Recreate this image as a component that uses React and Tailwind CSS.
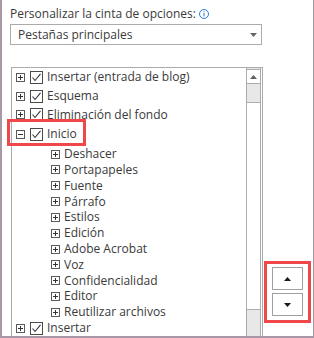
import React from 'react';

const font = { fontFamily: '"Open Sans", "Noto Sans", Arial, sans-serif' };

function Expander({ open = false }) {
  return (
    <svg width="9" height="9" viewBox="0 0 9 9" className="shrink-0">
      <rect x="0.5" y="0.5" width="8" height="8" fill="white" stroke="#5a5a5a" />
      <line x1="2" y1="4.5" x2="7" y2="4.5" stroke="#333" />
      {!open && <line x1="4.5" y1="2" x2="4.5" y2="7" stroke="#333" />}
    </svg>
  );
}

function Check() {
  return (
    <svg width="13" height="13" viewBox="0 0 13 13" className="shrink-0">
      <rect x="0.5" y="0.5" width="12" height="12" fill="white" stroke="#4a4a4a" />
      <polyline points="2.5,6.5 5,9.5 10.5,2.8" fill="none" stroke="#333" strokeWidth="1.1" />
    </svg>
  );
}

const topRows = ['Insertar (entrada de blog)', 'Esquema', 'Eliminación del fondo'];
const groups = [
  'Deshacer',
  'Portapapeles',
  'Fuente',
  'Párrafo',
  'Estilos',
  'Edición',
  'Adobe Acrobat',
  'Voz',
  'Confidencialidad',
  'Editor',
  'Reutilizar archivos',
];

function TopRow({ label, open }) {
  return (
    <div className="flex h-[19px] items-center pl-[4px]">
      <Expander open={open} />
      <span className="ml-[5px]"><Check /></span>
      <span className="ml-[4px] text-[12px] text-[#3a3a3a] leading-none">{label}</span>
    </div>
  );
}

function Tri({ down = false, color = '#333' }) {
  return (
    <svg width="7" height="4" viewBox="0 0 7 4">
      <polygon points={down ? '0,0 7,0 3.5,4' : '0,4 7,4 3.5,0'} fill={color} />
    </svg>
  );
}

export default function App() {
  return (
    <div
      style={font}
      className="relative w-[314px] h-[338px] bg-white border-l-2 border-r border-b-2 border-[#a898a6] overflow-hidden flex flex-col"
    >
      <div className="pl-[8px] pt-[6px] flex items-center h-[22px] text-[12px] text-[#3a3a3a]">
        Personalizar la cinta de opciones:
        <svg width="10" height="10" viewBox="0 0 10 10" className="ml-[3px]">
          <circle cx="5" cy="5" r="4.5" fill="none" stroke="#2b7bd6" />
          <rect x="4.5" y="4" width="1" height="3.5" fill="#2b7bd6" />
          <rect x="4.5" y="2.3" width="1" height="1" fill="#2b7bd6" />
        </svg>
      </div>
      <div className="ml-[8px] mt-[2px] w-[252px] h-[21px] border border-[#ababab] flex items-center justify-between pl-[7px] pr-[4px] text-[12px] text-[#3a3a3a]">
        <span>Pestañas principales</span>
        <Tri down color="#666" />
      </div>

      <div className="flex flex-1 mt-[22px] min-h-0">
        <div className="ml-[9px] w-[252px] border border-[#ababab] border-b-0 flex min-h-0">
          <div className="flex-1 flex flex-col">
            {topRows.map((r) => (
              <TopRow key={r} label={r} />
            ))}
            <div className="flex h-[20px] mb-[2px] items-center pl-[4px]">
              <Expander open />
              <span className="ml-[5px]"><Check /></span>
              <span className="ml-[4px] text-[12px] text-[#3a3a3a] leading-none">Inicio</span>
            </div>
            {groups.map((g) => (
              <div key={g} className="flex h-[16px] items-center pl-[39px]">
                <Expander />
                <span className="ml-[4px] text-[12px] text-[#3a3a3a] leading-none">{g}</span>
              </div>
            ))}
            <div className="flex h-[16px] items-center pl-[4px]">
              <Expander />
              <span className="ml-[5px]"><Check /></span>
              <span className="ml-[4px] text-[12px] text-[#3a3a3a] leading-none">Insertar</span>
            </div>
          </div>
          <div className="w-[15px] mr-[1px] flex flex-col bg-[#e8e8e8] border-x border-[#acacac]">
            <div className="h-[15px] mt-[1px] bg-white border-y border-[#acacac] flex items-center justify-center">
              <Tri color="#606060" />
            </div>
            <div className="h-[18px]" />
            <div className="h-[208px] bg-white border-y border-[#acacac]" />
          </div>
        </div>
        <div className="ml-[1px] pt-[194px]">
          <div className="w-[47px] h-[62px] border-[3px] border-[#f0474b] flex flex-col items-center pt-[3px] gap-[3px]">
            <div className="w-[31px] h-[23px] border border-[#a0a0a0] bg-white flex items-center justify-center">
              <Tri color="#1a1a1a" />
            </div>
            <div className="w-[31px] h-[23px] border border-[#a0a0a0] bg-white flex items-center justify-center">
              <Tri down color="#1a1a1a" />
            </div>
          </div>
        </div>
      </div>
      <div className="absolute left-[5px] top-[119px] w-[79px] h-[27px] border-[3px] border-[#f0474b] pointer-events-none" />
    </div>
  );
}
